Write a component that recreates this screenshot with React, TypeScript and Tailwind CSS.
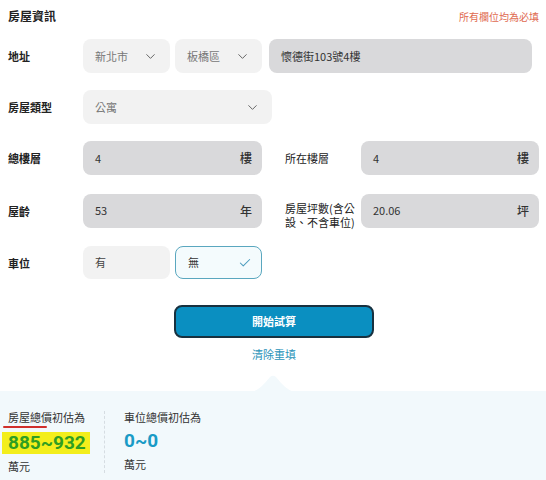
import React from "react";
import { ChevronDown, Check } from "lucide-react";

const font = { fontFamily: '"Noto Sans CJK TC", "Noto Sans", sans-serif' };

function Select({ value, className }: { value: string; className: string }) {
  return (
    <div className={`h-[34px] rounded-[8px] bg-[#f2f2f2] flex items-center justify-between pl-[12px] pr-[12px] text-[11px] text-[#777] ${className}`}>
      <span>{value}</span>
      <ChevronDown size={15} strokeWidth={1.6} className="text-[#666]" />
    </div>
  );
}

function Field({ value, unit, className }: { value: string; unit?: string; className: string }) {
  return (
    <div className={`h-[34px] rounded-[8px] bg-[#d9d9db] flex items-center justify-between pl-[12px] pr-[10px] text-[11px] text-[#333] ${className}`}>
      <span>{value}</span>
      {unit && <span className="text-[12px] font-medium text-[#333]">{unit}</span>}
    </div>
  );
}

function Label({ children, className = "" }: { children: React.ReactNode; className?: string }) {
  return <div className={`text-[11px] font-bold text-[#222] leading-[14px] ${className}`}>{children}</div>;
}

export default function App() {
  return (
    <div className="w-[546px] h-[480px] bg-white overflow-hidden relative" style={font}>
      <div className="pl-[8px] pr-[7px]">
        <div className="flex items-center justify-between h-[31px] pt-[1px]">
          <div className="text-[12px] font-bold text-[#222]">房屋資訊</div>
          <div className="text-[10px] text-[#e06a50]">所有欄位均為必填</div>
        </div>

        <div className="flex flex-col gap-[17px] mt-[8px]">
          <div className="flex items-center">
            <Label className="w-[75px]">地址</Label>
            <Select value="新北市" className="w-[87px]" />
            <Select value="板橋區" className="w-[87px] ml-[5px]" />
            <Field value="懷德街103號4樓" className="w-[263px] ml-[7px]" />
          </div>

          <div className="flex items-center">
            <Label className="w-[75px]">房屋類型</Label>
            <Select value="公寓" className="w-[189px]" />
          </div>

          <div className="flex items-center">
            <Label className="w-[75px]">總樓層</Label>
            <Field value="4" unit="樓" className="w-[179px]" />
            <Label className="w-[76px] ml-[23px] font-normal text-[#222]">所在樓層</Label>
            <Field value="4" unit="樓" className="w-[178px]" />
          </div>

          <div className="flex items-center">
            <Label className="w-[75px]">屋齡</Label>
            <Field value="53" unit="年" className="w-[179px]" />
            <div className="w-[76px] ml-[23px] flex flex-col text-[11px] text-[#222] leading-[13px] pt-[10px] gap-[1px]">
              <span>房屋坪數(含公</span>
              <span>設、不含車位)</span>
            </div>
            <Field value="20.06" unit="坪" className="w-[178px]" />
          </div>

          <div className="flex items-center">
            <Label className="w-[75px]">車位</Label>
            <div className="w-[87px] h-[33px] rounded-[8px] bg-[#f2f2f2] flex items-center pl-[12px] text-[11px] text-[#444]">有</div>
            <div className="w-[87px] h-[33px] ml-[5px] rounded-[8px] border border-[#5aa7bf] bg-[#f4fbfd] flex items-center justify-between pl-[12px] pr-[9px] text-[11px] text-[#333]">
              <span>無</span>
              <Check size={14} strokeWidth={1.8} className="text-[#4a9bbd]" />
            </div>
          </div>
        </div>

        <div className="flex flex-col items-center mt-[26px]">
          <button className="w-[200px] h-[33px] rounded-[8px] bg-[#0a8fc1] border-[2px] border-[#18313f] text-white text-[11px] font-bold ml-[1px]">
            開始試算
          </button>
          <div className="text-[11px] text-[#2a92b8] mt-[8px] ml-[1px]">清除重填</div>
        </div>
      </div>

      <div className="absolute left-0 right-0 top-[391px] bottom-0 bg-[#f2f9fc]">
        <svg className="absolute left-[252px] top-[-16px]" width="42" height="17" viewBox="0 0 42 17">
          <path d="M0 17 Q8 15 18 2 Q21 -0.5 24 2 Q34 15 42 17 Z" fill="#f2f9fc" />
        </svg>
        <div className="flex pt-[18px] pl-[8px]">
          <div className="w-[96px] flex flex-col">
            <div className="relative text-[11px] text-[#333] leading-[16px]">
              房屋總價初估為
              <div className="absolute left-[-5px] top-[17px] w-[44px] h-[2px] bg-[#d0302c] rounded-full" />
            </div>
            <div className="mt-[5px]">
              <span className="inline-block bg-[#f3ee1c] text-[#2f9e22] text-[19px] font-bold leading-[22px] pl-[6px] pr-[4px] ml-[-6px]" style={{ fontFamily: '"Roboto", "Liberation Sans", sans-serif' }}>
                885~932
              </span>
            </div>
            <div className="text-[11px] text-[#333] mt-[4px] leading-[16px]">萬元</div>
          </div>
          <div className="w-0 h-[62px] border-l border-dashed border-[#d6dde2] mt-[2px]" />
          <div className="pl-[19px] flex flex-col">
            <div className="text-[11px] text-[#333] leading-[16px]">車位總價初估為</div>
            <div className="mt-[5px] text-[#1a9bc6] text-[19px] font-bold leading-[22px]" style={{ fontFamily: '"Roboto", "Liberation Sans", sans-serif' }}>
              0~0
            </div>
            <div className="text-[11px] text-[#333] mt-[4px] leading-[16px]">萬元</div>
          </div>
        </div>
      </div>
    </div>
  );
}
